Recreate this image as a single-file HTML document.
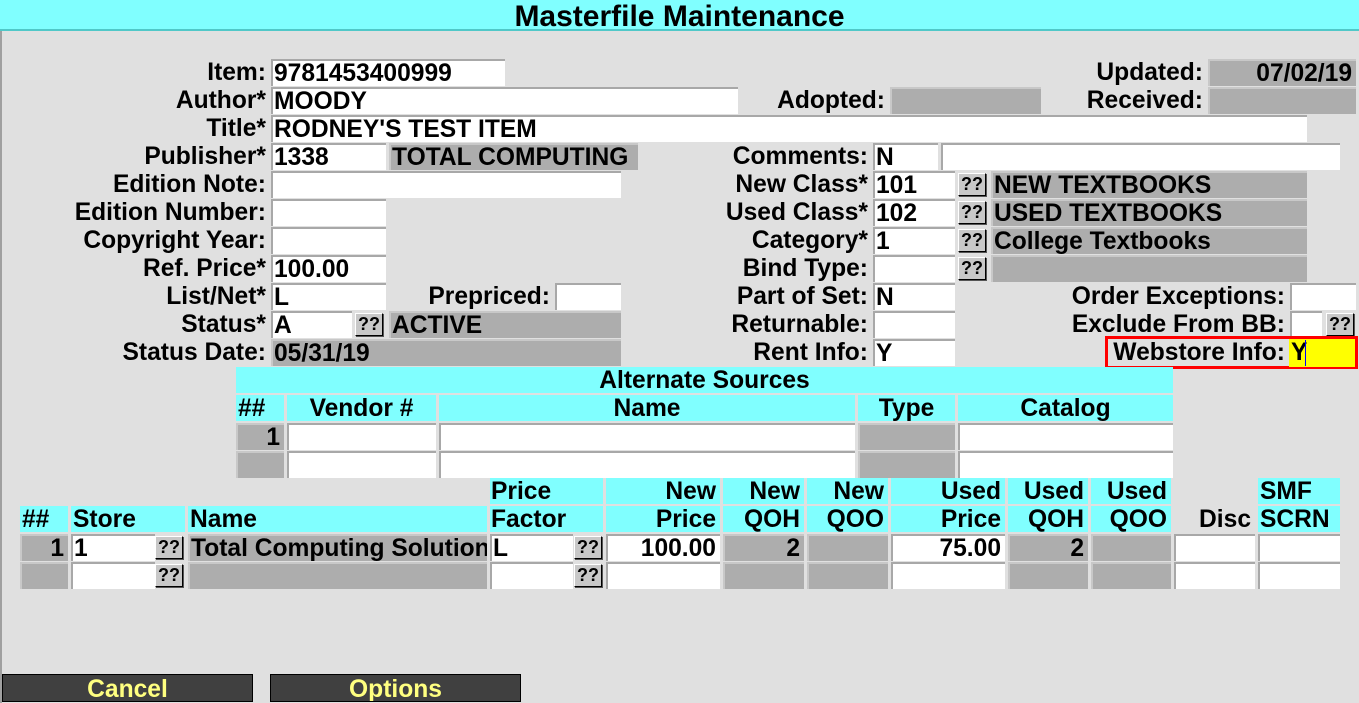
<!DOCTYPE html>
<html><head><meta charset="utf-8"><style>
body{margin:0;width:1359px;height:703px;background:#e0e0e0;position:relative;overflow:hidden;font-family:"Liberation Sans",Arial,sans-serif;font-weight:bold;font-size:24.6px;color:#000}
div{position:absolute;box-sizing:border-box;white-space:nowrap;overflow:hidden;line-height:27px}
.l{text-align:right}
.w{background:#fff;border-top:2px solid #a8a8a8;border-left:2px solid #a8a8a8;height:27px;padding-left:1px;line-height:25px}
.g{background:#adadad;border-top:2px solid #c8c8c8;border-left:2px solid #c8c8c8;height:27px;padding-left:1px;line-height:25px}
.r{text-align:right;padding-right:4px}
.b{background:#c8c8c8;border:1px solid #000;border-top-color:#fff;border-left-color:#fff;box-shadow:1px 1px 0 #555;width:28px;height:23px;font-size:18px;line-height:20px;text-align:center}
.c{background:#80ffff;height:26px;line-height:27px}
.btn{background:#404040;border:1px solid #000;color:#ffff80;text-align:center;height:28px;top:674px;line-height:29px}
</style></head><body>
<div style="left:0;top:0;width:2px;height:703px;background:#a0a0a0"></div>
<div style="left:0;top:0;width:1359px;height:31px;background:#80ffff;border-bottom:2px solid #50c8c8;text-align:center;font-size:30px;line-height:33px">Masterfile Maintenance</div>

<div class="l" style="left:0;width:266px;top:59px">Item:</div>
<div class="l" style="left:0;width:266px;top:87px">Author*</div>
<div class="l" style="left:0;width:266px;top:115px">Title*</div>
<div class="l" style="left:0;width:266px;top:143px">Publisher*</div>
<div class="l" style="left:0;width:266px;top:171px">Edition Note:</div>
<div class="l" style="left:0;width:266px;top:199px">Edition Number:</div>
<div class="l" style="left:0;width:266px;top:227px">Copyright Year:</div>
<div class="l" style="left:0;width:266px;top:255px">Ref. Price*</div>
<div class="l" style="left:0;width:266px;top:283px">List/Net*</div>
<div class="l" style="left:0;width:266px;top:311px">Status*</div>
<div class="l" style="left:0;width:266px;top:339px">Status Date:</div>

<div class="w" style="left:271px;top:59px;width:234px">9781453400999</div>
<div class="w" style="left:271px;top:87px;width:467px">MOODY</div>
<div class="w" style="left:271px;top:115px;width:1036px">RODNEY'S TEST ITEM</div>
<div class="w" style="left:271px;top:143px;width:115px">1338</div>
<div class="g" style="left:389px;top:143px;width:249px">TOTAL COMPUTING</div>
<div class="w" style="left:271px;top:171px;width:350px"></div>
<div class="w" style="left:271px;top:199px;width:115px"></div>
<div class="w" style="left:271px;top:227px;width:115px"></div>
<div class="w" style="left:271px;top:255px;width:115px">100.00</div>
<div class="w" style="left:271px;top:283px;width:115px">L</div>
<div class="l" style="left:300px;width:250px;top:283px">Prepriced:</div>
<div class="w" style="left:555px;top:283px;width:66px"></div>
<div class="w" style="left:271px;top:311px;width:81px">A</div>
<div class="b" style="left:355px;top:313px">??</div>
<div class="g" style="left:389px;top:311px;width:232px">ACTIVE</div>
<div class="g" style="left:271px;top:339px;width:350px">05/31/19</div>

<div class="l" style="left:600px;width:285px;top:87px">Adopted:</div>
<div class="g" style="left:890px;top:87px;width:151px"></div>
<div class="l" style="left:600px;width:268px;top:143px">Comments:</div>
<div class="w" style="left:873px;top:143px;width:65px">N</div>
<div class="w" style="left:941px;top:143px;width:399px"></div>
<div class="l" style="left:600px;width:268px;top:171px">New Class*</div>
<div class="l" style="left:600px;width:268px;top:199px">Used Class*</div>
<div class="l" style="left:600px;width:268px;top:227px">Category*</div>
<div class="l" style="left:600px;width:268px;top:255px">Bind Type:</div>
<div class="l" style="left:600px;width:268px;top:283px">Part of Set:</div>
<div class="l" style="left:600px;width:268px;top:311px">Returnable:</div>
<div class="l" style="left:600px;width:268px;top:339px">Rent Info:</div>
<div class="w" style="left:873px;top:171px;width:82px">101</div>
<div class="b" style="left:958px;top:173px">??</div>
<div class="g" style="left:991px;top:171px;width:316px">NEW TEXTBOOKS</div>
<div class="w" style="left:873px;top:199px;width:82px">102</div>
<div class="b" style="left:958px;top:201px">??</div>
<div class="g" style="left:991px;top:199px;width:316px">USED TEXTBOOKS</div>
<div class="w" style="left:873px;top:227px;width:82px">1</div>
<div class="b" style="left:958px;top:229px">??</div>
<div class="g" style="left:991px;top:227px;width:316px">College Textbooks</div>
<div class="w" style="left:873px;top:255px;width:82px"></div>
<div class="b" style="left:958px;top:257px">??</div>
<div class="g" style="left:991px;top:255px;width:316px"></div>
<div class="w" style="left:873px;top:283px;width:82px">N</div>
<div class="w" style="left:873px;top:311px;width:82px"></div>
<div class="w" style="left:873px;top:339px;width:82px">Y</div>

<div class="l" style="left:1000px;width:203px;top:59px">Updated:</div>
<div class="g r" style="left:1208px;top:59px;width:148px">07/02/19</div>
<div class="l" style="left:1000px;width:203px;top:87px">Received:</div>
<div class="g" style="left:1208px;top:87px;width:148px"></div>
<div class="l" style="left:1000px;width:285px;top:283px">Order Exceptions:</div>
<div class="w" style="left:1290px;top:283px;width:66px"></div>
<div class="l" style="left:1000px;width:285px;top:311px">Exclude From BB:</div>
<div class="w" style="left:1290px;top:311px;width:32px"></div>
<div class="b" style="left:1326px;top:313px">??</div>
<div style="left:1105px;top:336px;width:253px;height:33px;border:3px solid #f00"></div>
<div class="l" style="left:1100px;width:185px;top:339px">Webstore Info:</div>
<div style="left:1289px;top:339px;width:66px;height:28px;background:#ffff00;line-height:28px;padding-left:2px">Y</div>
<div style="left:1305px;top:340px;width:1px;height:26px;background:#00f"></div>

<div class="c" style="left:236px;top:367px;width:937px;text-align:center">Alternate Sources</div>
<div class="c" style="left:236px;top:395px;width:48px;padding-left:2px">##</div>
<div class="c" style="left:287px;top:395px;width:149px;text-align:center">Vendor #</div>
<div class="c" style="left:439px;top:395px;width:416px;text-align:center">Name</div>
<div class="c" style="left:858px;top:395px;width:97px;text-align:center">Type</div>
<div class="c" style="left:958px;top:395px;width:215px;text-align:center">Catalog</div>
<div class="g r" style="left:236px;top:423px;width:48px">1</div>
<div class="w" style="left:287px;top:423px;width:149px"></div>
<div class="w" style="left:439px;top:423px;width:416px"></div>
<div class="g" style="left:858px;top:423px;width:97px"></div>
<div class="w" style="left:958px;top:423px;width:215px"></div>
<div class="g" style="left:236px;top:451px;width:48px"></div>
<div class="w" style="left:287px;top:451px;width:149px"></div>
<div class="w" style="left:439px;top:451px;width:416px"></div>
<div class="g" style="left:858px;top:451px;width:97px"></div>
<div class="w" style="left:958px;top:451px;width:215px"></div>

<div class="c" style="left:490px;top:478px;width:113px;padding-left:1px">Price</div>
<div class="c r" style="left:606px;top:478px;width:114px">New</div>
<div class="c r" style="left:723px;top:478px;width:81px">New</div>
<div class="c r" style="left:807px;top:478px;width:81px">New</div>
<div class="c r" style="left:891px;top:478px;width:114px">Used</div>
<div class="c r" style="left:1008px;top:478px;width:80px">Used</div>
<div class="c r" style="left:1091px;top:478px;width:80px">Used</div>
<div class="c" style="left:1258px;top:478px;width:82px;padding-left:2px">SMF</div>
<div class="c" style="left:20px;top:506px;width:48px;padding-left:2px">##</div>
<div class="c" style="left:71px;top:506px;width:114px;padding-left:2px">Store</div>
<div class="c" style="left:188px;top:506px;width:299px;padding-left:2px">Name</div>
<div class="c" style="left:490px;top:506px;width:113px;padding-left:1px">Factor</div>
<div class="c r" style="left:606px;top:506px;width:114px">Price</div>
<div class="c r" style="left:723px;top:506px;width:81px">QOH</div>
<div class="c r" style="left:807px;top:506px;width:81px">QOO</div>
<div class="c r" style="left:891px;top:506px;width:114px">Price</div>
<div class="c r" style="left:1008px;top:506px;width:80px">QOH</div>
<div class="c r" style="left:1091px;top:506px;width:80px">QOO</div>
<div class="r" style="left:1174px;top:506px;width:81px">Disc</div>
<div class="c" style="left:1258px;top:506px;width:82px;padding-left:2px">SCRN</div>

<div class="g r" style="left:20px;top:534px;width:48px">1</div>
<div class="w" style="left:71px;top:534px;width:84px">1</div>
<div class="b" style="left:155px;top:536px">??</div>
<div class="g" style="left:188px;top:534px;width:299px">Total Computing Solutions</div>
<div class="w" style="left:490px;top:534px;width:83px">L</div>
<div class="b" style="left:574px;top:536px">??</div>
<div class="w r" style="left:606px;top:534px;width:114px">100.00</div>
<div class="g r" style="left:723px;top:534px;width:81px">2</div>
<div class="g" style="left:807px;top:534px;width:81px"></div>
<div class="w r" style="left:891px;top:534px;width:114px">75.00</div>
<div class="g r" style="left:1008px;top:534px;width:80px">2</div>
<div class="g" style="left:1091px;top:534px;width:80px"></div>
<div class="w" style="left:1174px;top:534px;width:81px"></div>
<div class="w" style="left:1258px;top:534px;width:82px"></div>
<div class="g" style="left:20px;top:562px;width:48px"></div>
<div class="w" style="left:71px;top:562px;width:84px"></div>
<div class="b" style="left:155px;top:564px">??</div>
<div class="g" style="left:188px;top:562px;width:299px"></div>
<div class="w" style="left:490px;top:562px;width:83px"></div>
<div class="b" style="left:574px;top:564px">??</div>
<div class="w" style="left:606px;top:562px;width:114px"></div>
<div class="g" style="left:723px;top:562px;width:81px"></div>
<div class="g" style="left:807px;top:562px;width:81px"></div>
<div class="w" style="left:891px;top:562px;width:114px"></div>
<div class="g" style="left:1008px;top:562px;width:80px"></div>
<div class="g" style="left:1091px;top:562px;width:80px"></div>
<div class="w" style="left:1174px;top:562px;width:81px"></div>
<div class="w" style="left:1258px;top:562px;width:82px"></div>

<div class="btn" style="left:2px;width:251px">Cancel</div>
<div class="btn" style="left:270px;width:251px">Options</div>
</body></html>
